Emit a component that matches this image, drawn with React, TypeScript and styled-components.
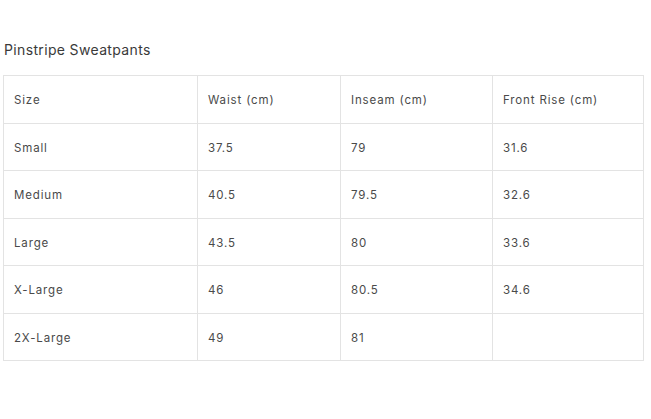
import styled, { createGlobalStyle } from "styled-components";

const GlobalStyle = createGlobalStyle`
  body {
    margin: 0;
    background: #ffffff;
    font-family: "Inter", "Liberation Sans", sans-serif;
  }
`;

type Row = string[];

const headers: Row = ["Size", "Waist (cm)", "Inseam (cm)", "Front Rise (cm)"];
const rows: Row[] = [
  ["Small", "37.5", "79", "31.6"],
  ["Medium", "40.5", "79.5", "32.6"],
  ["Large", "43.5", "80", "33.6"],
  ["X-Large", "46", "80.5", "34.6"],
  ["2X-Large", "49", "81", ""],
];

const colWidths = [194, 143, 152, 151];

export default function App() {
  return (
    <>
      <GlobalStyle />
      <Page>
        <Title>Pinstripe Sweatpants</Title>
        <SizeTable>
          <colgroup>
            {colWidths.map((w, i) => (
              <col key={i} style={{ width: w }} />
            ))}
          </colgroup>
          <tbody>
            <tr>
              {headers.map((h) => (
                <Cell key={h}>{h}</Cell>
              ))}
            </tr>
            {rows.map((r) => (
              <tr key={r[0]}>
                {r.map((c, i) => (
                  <Cell key={i}>{c}</Cell>
                ))}
              </tr>
            ))}
          </tbody>
        </SizeTable>
      </Page>
    </>
  );
}

const Page = styled.div`
  padding: 40px 0 0 3px;
`;

const Title = styled.div`
  font-size: 14px;
  line-height: 20px;
  letter-spacing: 0.35px;
  color: #3a3a3a;
  padding-left: 1px;
  margin-bottom: 15px;
`;

const SizeTable = styled.table`
  width: 640px;
  border-collapse: collapse;
  table-layout: fixed;
`;

const Cell = styled.td`
  height: 47.5px;
  box-sizing: border-box;
  border: 1px solid #e3e3e3;
  padding: 2px 10px 0;
  font-size: 11.5px;
  letter-spacing: 0.85px;
  color: #4a4a4a;
  vertical-align: middle;
`;
